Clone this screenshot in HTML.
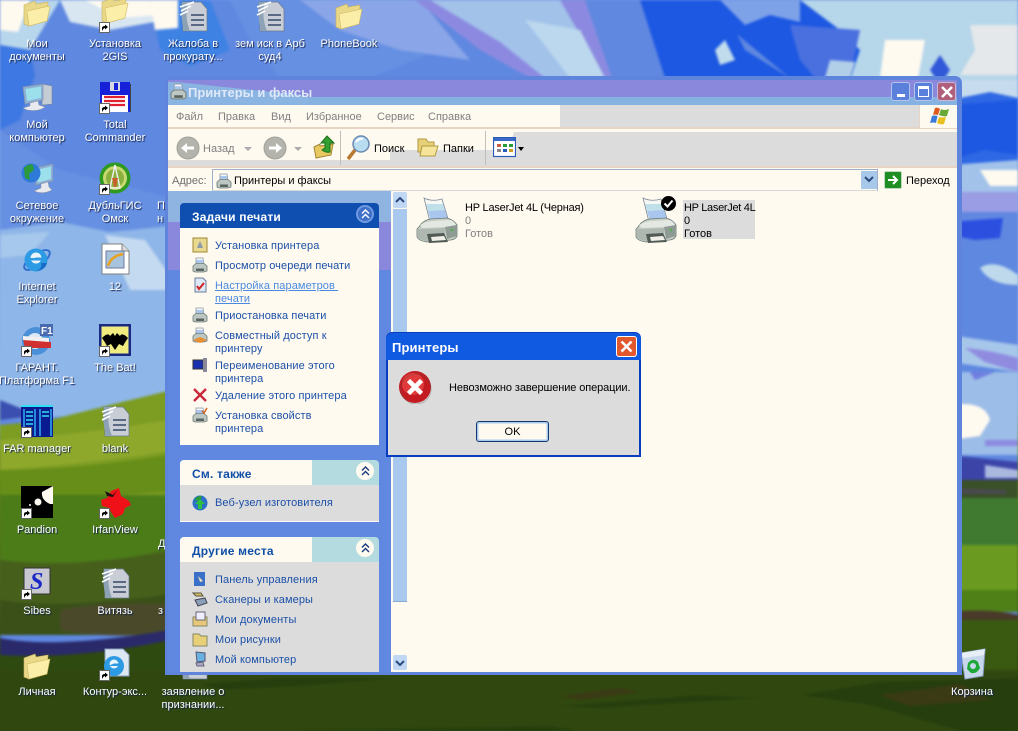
<!DOCTYPE html>
<html><head><meta charset="utf-8"><style>
html,body{margin:0;padding:0;width:1018px;height:731px;overflow:hidden;background:linear-gradient(#6f95e2 0,#8fb6e8 55%,#6a9020 62%,#46601c 82%,#30480f 90%)}
body{position:relative;font:11px/13px "Liberation Sans","Noto Sans CJK JP",sans-serif}
.a{position:absolute}
svg{display:block}
.ic{position:absolute;width:32px;height:32px}
.d{position:absolute;width:78px;text-align:center;color:#fff;text-shadow:1px 1px 1px #10204a;white-space:nowrap;font-size:11px;line-height:13px;padding-top:2px}
.t{position:absolute;white-space:nowrap;line-height:13px;padding-top:2px}
.l{position:absolute;left:215px;color:#1c50a8;white-space:nowrap;line-height:13px;letter-spacing:.1px;padding-top:2px}
.h{position:absolute;font-weight:bold;font-size:12px;line-height:14px;white-space:nowrap;letter-spacing:.2px;padding-top:1px}
.m{position:absolute;top:110px;color:#808080;line-height:13px;padding-top:1px}
.s{position:absolute;width:16px;height:16px;left:192px}
.ch{position:absolute;left:356px;width:18px;height:18px;border-radius:9px;background:#fff;box-sizing:border-box}
</style></head><body>

<svg class="a" style="left:0;top:0;filter:blur(1.2px)" width="1018" height="731" viewBox="0 0 1018 731">
<rect width="1018" height="731" fill="#5f88e0"/>
<path d="M0 0H60L30 50L0 45Z" fill="#b8d6ec"/>
<path d="M0 0H30L18 32L0 30Z" fill="#fffaf0"/>
<path d="M0 45L30 50L35 75L20 120L0 130Z" fill="#3e78e2"/>
<path d="M60 0H170L165 20L110 30L70 22Z" fill="#d8e6f2"/>
<path d="M85 0H170V14L120 18Z" fill="#fffaf0"/>
<path d="M150 0H210L230 50L190 66L160 50Z" fill="#3e82e4"/>
<path d="M150 0H178V28L155 30Z" fill="#fffaf0"/>
<path d="M230 0H410L440 50L370 78H280L250 40Z" fill="#6690e2"/>
<path d="M300 0H420L470 60L400 50L340 30Z" fill="#8aa6e8"/>
<path d="M415 0H585L612 78H530L480 50Z" fill="#8c8ae0"/>
<path d="M430 0H560L605 78H545L500 42Z" fill="#a2c2ea"/>
<path d="M525 20L570 78H605L580 30Z" fill="#bcd8ee"/>
<path d="M585 0H645L665 78H612Z" fill="#6088e0"/>
<path d="M640 0H720L745 50L790 78H665Z" fill="#1d58e2"/>
<path d="M705 0H860L875 78H790L750 45L720 20Z" fill="#1d58e2"/>
<path d="M720 0H800L800 22L770 15L745 25Z" fill="#7ea2e8"/>
<path d="M715 50L725 40L735 60L720 65Z" fill="#c0dcec"/>
<path d="M800 0H1018V80H850L860 50L840 30Z" fill="#b6d6ea"/>
<path d="M790 25L860 30L850 78H815L800 60Z" fill="#4a70e0"/>
<path d="M830 60L855 62L850 78H825Z" fill="#b2cfe8"/>
<path d="M885 40H925L918 78H880Z" fill="#fffaf0"/>
<path d="M970 25H1018V75H960L975 50Z" fill="#e4e8ea"/>
<path d="M940 55L950 70L940 85L930 70Z" fill="#3058d8"/>
<path d="M950 80H1018V190H950Z" fill="#2e68e4"/>
<path d="M950 80H1018V98L990 92L950 100Z" fill="#c6dcee"/>
<path d="M950 105L1018 100V155L985 150L950 160Z" fill="#1d58e2"/>
<path d="M950 165L1018 160V192H950Z" fill="#a2c2ea"/>
<path d="M980 170H1018V186H990Z" fill="#fffaf0"/>
<path d="M950 192H1018V212H950Z" fill="#9a9ce4"/>
<path d="M950 212H1018V240H950Z" fill="#6088e0"/>
<path d="M950 222L1003 218L1000 238L975 240L950 235Z" fill="#2c4fe0"/>
<path d="M980 268Q995 258 1018 275L1018 285Q990 285 980 268Z" fill="#bed9ec"/>
<path d="M950 335L1018 345V372L950 362Z" fill="#a6c6ea"/>
<path d="M965 348Q990 350 1018 358V372L985 362Z" fill="#8f8ce0"/>
<path d="M950 372H1018V455H950Z" fill="#9cbde8"/>
<path d="M970 372L995 372L975 380Z" fill="#6f7ee0"/>
<path d="M950 405Q985 400 990 420L980 436L950 440Z" fill="#fffaf0"/>
<path d="M985 440H1018V446H985Z" fill="#8c8ae0"/>
<path d="M0 130L60 170L180 200V240L60 230L0 240Z" fill="#6690e2"/>
<path d="M0 230L60 222L110 232L180 225V410L0 420Z" fill="#8fb6e8"/>
<path d="M105 235L145 240L180 290H130Z" fill="#c4daf0"/>
<path d="M0 235L50 232L30 255L0 258Z" fill="#a6c8ec"/>
<path d="M0 420L40 416L0 400Z" fill="#3a4fb0"/>
<path d="M0 425L50 420L110 405L180 388V520H0Z" fill="#7c9c22"/>
<path d="M0 440Q80 435 180 418V450Q80 465 0 470Z" fill="#8ea82c"/>
<path d="M0 470Q80 470 180 453V490Q80 500 0 495Z" fill="#668e18"/>
<path d="M0 495H180V590H0Z" fill="#4c7c18"/>
<path d="M0 560Q80 570 180 548V620H0Z" fill="#46601c"/>
<path d="M0 600Q60 610 180 593V635H0Z" fill="#3a5018"/>
<path d="M60 610Q110 600 180 605V632Q110 640 60 630Z" fill="#4a4a2a"/>
<path d="M0 638Q60 650 180 628V642Q80 662 0 656Z" fill="#2a2a6a"/>
<path d="M0 655Q80 660 180 638V731H0Z" fill="#2f4a10"/>
<path d="M950 455L1018 462V480H950Z" fill="#3c44a8"/>
<path d="M985 465L1018 470V478H985Z" fill="#aab8e0"/>
<path d="M950 480H1018V500H950Z" fill="#3a5028"/>
<path d="M950 488L1006 490V494H950Z" fill="#4a4a50"/>
<path d="M950 498H1018V548H950Z" fill="#3f7a30"/>
<path d="M950 545H1018V612H950Z" fill="#6a9a20"/>
<path d="M950 590H1018V612H950Z" fill="#4f8018"/>
<path d="M950 612Q990 608 1018 615V622L950 620Z" fill="#4a3a2a"/>
<path d="M950 620H1018V731H950Z" fill="#3a5a12"/>
<path d="M0 670H1018V731H0Z" fill="#30480f"/>
<g fill="#263e0e">
<path d="M200 684L280 678H400L300 686L220 690Z"/><path d="M560 706L700 695L760 698L600 708Z"/>
<path d="M800 695L880 682L1018 678V731H960L870 705Z"/><path d="M300 730L550 726L580 731H300Z"/>
</g>
<g fill="#3a3a14">
<path d="M880 695L960 684L990 700L910 706Z"/><path d="M560 696L620 688L640 692L580 700Z"/>
</g>
</svg>

<svg width="0" height="0" style="position:absolute">
<defs>
<symbol id="folder" viewBox="0 0 32 32"><path d="M3 8L14 4L15 7L27 5L26 24L8 29L3 27Z" fill="#e8d888" stroke="#c8b060" stroke-width=".6"/><path d="M6 14L29 9L26 24L8 29Z" fill="#fbeea8" stroke="#d0b860" stroke-width=".6"/></symbol>
<symbol id="sc" viewBox="0 0 11 11"><rect width="11" height="11" fill="#fff"/><rect x=".5" y=".5" width="10" height="10" fill="#fff" stroke="#000" stroke-width=".6"/><path d="M3 9V6Q3 4 6 4V2.5L9 5L6 7.5V6Q4.5 6 3 9Z" fill="#000"/></symbol>
<symbol id="doc" viewBox="0 0 32 32"><path d="M5 2H24L30 9V31H6Z" fill="#c8cdd6" stroke="#6a7a8c" stroke-width=".7"/><path d="M5 2Q3 16 7 31H13Q7 16 11 2Z" fill="#8ea2b6"/><path d="M3 7L17 2M4 11L14 6M3 15L11 11" stroke="#fff" stroke-width="1.6" fill="none"/><path d="M14 15H27M14 20H27M14 25H27" stroke="#5a6a84" stroke-width="2"/></symbol>
<symbol id="comp" viewBox="0 0 32 32"><path d="M21 3L31 5V23L21 24Z" fill="#c4ccd6" stroke="#7a8a9a" stroke-width=".6"/><path d="M2 6L22 3V19L4 23Z" fill="#8fb0d6" stroke="#8494a8" stroke-width=".7"/><path d="M4.500 8L20 5.500V17L6 20Z" fill="#9ce0ec"/><path d="M9 22L17 20L18 24L24 26Q18 31 6 29L2 27L9 25Z" fill="#e8eaf0" stroke="#8a92a0" stroke-width=".5"/></symbol>
<symbol id="net" viewBox="0 0 32 32"><path d="M13 6L32 2V19L15 23Z" fill="#8fb0d6" stroke="#8494a8" stroke-width=".7"/><path d="M15 8L30 4.500V17L17 20.500Z" fill="#9ce0ec"/><path d="M20 22L27 20L28 25L31 28Q22 33 13 29L20 26Z" fill="#e8eaf0" stroke="#8a92a0" stroke-width=".5"/><circle cx="10" cy="11" r="9.500" fill="#2e7ad8"/><path d="M3 6Q8 1 12 3L13 8L8 12L9 18L4 16Z" fill="#2c9a3a"/></symbol>
<symbol id="ie" viewBox="0 0 32 32"><ellipse cx="16" cy="17" rx="15" ry="6" transform="rotate(-35 16 17)" fill="none" stroke="#2f6fd0" stroke-width="2"/><circle cx="15" cy="17" r="11.500" fill="#2d9ae4"/><circle cx="15" cy="15" r="5.500" fill="#e8f4fa"/><rect x="8" y="15" width="14" height="2.500" fill="#2d9ae4"/><path d="M15 14.500H21V17H9Z" fill="#2d9ae4"/><path d="M20 20L26 20Q24 27 15 28Q22 25 20 20Z" fill="#1a6ac8"/></symbol>
<symbol id="tc" viewBox="0 0 32 32"><rect x="1" y="1" width="30" height="30" fill="#1620d8"/><rect x="3" y="14" width="26" height="17" fill="#fff"/><path d="M5 16H26M5 20H26M5 24H26" stroke="#e02030" stroke-width="2.200"/><rect x="11" y="1" width="10" height="9" fill="#d8d8e0"/><rect x="15" y="2" width="4" height="7" fill="#1620d8"/><rect x="31" y="3" width="1" height="28" fill="#444"/></symbol>
<symbol id="dubl" viewBox="0 0 32 32"><circle cx="16" cy="16" r="15.500" fill="#2e9a20"/><circle cx="16" cy="16" r="12" fill="#c8d870"/><circle cx="16" cy="16" r="9" fill="#8ab040"/><path d="M16 3L21 26H11Z" fill="none" stroke="#eee" stroke-width="1.500"/><path d="M13 16H19L17 25H15Z" fill="#c8602a"/></symbol>
<symbol id="note" viewBox="0 0 32 32"><path d="M3 1H23L30 8V31H3Z" fill="#fff" stroke="#808080"/><path d="M23 1V8H30" fill="#ddd" stroke="#808080"/><rect x="7" y="8" width="18" height="17" fill="#a8c4dc" stroke="#6a7a9c"/><path d="M9 23Q12 13 24 11" stroke="#e8a020" stroke-width="2.500" fill="none"/></symbol>
<symbol id="gar" viewBox="0 0 32 32"><circle cx="15" cy="17" r="14" fill="#4a90d8"/><circle cx="14" cy="17" r="8" fill="#dce8f4"/><path d="M2 15L30 18V24L4 24Z" fill="#d03030"/><path d="M2 12L28 14V18L2 16Z" fill="#f0f0f0"/><rect x="19" y="0" width="13" height="12" fill="#4a6ab0"/><text x="20" y="10" font-size="10" font-family="Liberation Sans" font-weight="bold" fill="#fff">F1</text></symbol>
<symbol id="bat" viewBox="0 0 32 32"><rect width="32" height="32" fill="#1a2a80"/><rect x="2.500" y="2.500" width="27" height="27" fill="#f0ec80"/><path d="M3 14Q9 8 11 12L14 9L16 12L18 9L21 12Q23 8 29 14Q26 18 24 22L20 20L16 26L12 20L8 22Q6 18 3 14Z" fill="#000"/></symbol>
<symbol id="far" viewBox="0 0 32 32"><rect width="32" height="32" fill="#0a1a90"/><rect x="0" y="0" width="32" height="2" fill="#30e0f0"/><path d="M3 4V31M14 4V31M19 4V31M30 4V31" stroke="#30b0f0" stroke-width="1.500"/><path d="M5 7H12M5 11H12M5 15H12M5 19H12M21 7H28M21 11H28" stroke="#30e0f0" stroke-width="1.500"/></symbol>
<symbol id="pand" viewBox="0 0 32 32"><rect width="32" height="32" fill="#000"/><path d="M21 6L32 0V18L29 18Q20 14 21 6Z" fill="#fffaf0"/><circle cx="17" cy="16" r="3.500" fill="#fffaf0"/><circle cx="9" cy="19" r="1" fill="#fff"/></symbol>
<symbol id="irf" viewBox="0 0 32 32"><path d="M2 14L8 12L12 5L20 2L22 10L30 15L32 19L26 22L24 28L16 32L12 26L10 22L3 20Z" fill="#f01018"/><path d="M6 5L14 9L18 4L14 11L8 10Z" fill="#201010"/></symbol>
<symbol id="sib" viewBox="0 0 32 32"><rect x="3" y="1" width="26" height="26" fill="#c8c8d0" stroke="#333"/><text x="9" y="22" font-size="24" font-family="Liberation Serif" font-style="italic" font-weight="bold" fill="#1a28c8">S</text></symbol>
<symbol id="iedoc" viewBox="0 0 32 32"><path d="M6 1H24L30 7V28H6Z" fill="#dce8f4" stroke="#8aa0bc"/><circle cx="15" cy="18" r="10" fill="#2d9ae4"/><circle cx="15" cy="16" r="4.500" fill="#e8f4fa"/><path d="M15 15.500H20V18H9Z" fill="#2d9ae4"/></symbol>
<symbol id="bin" viewBox="0 0 32 32"><path d="M4 5L28 1L26 28L8 31Z" fill="#c8d8ec" stroke="#8aa0c8"/><path d="M4 5L28 1L27 7L6 10Z" fill="#e8eef6"/><path d="M11 15Q16 9 21 14L23 20Q20 26 14 25L10 21Z" fill="#1ea83a"/><circle cx="16" cy="18" r="3" fill="#c8d8ec"/></symbol>
<symbol id="prn" viewBox="0 0 44 48">
<path d="M9 2Q17 6 27 3L34 26H15Z" fill="#f6f6f2" stroke="#7c8a96" stroke-width=".8"/>
<path d="M11 8L28 8L30 14L13 15Z" fill="#bfe0e8"/><path d="M13 15L30 14L33 24L16 25Z" fill="#a8c6ee"/>
<path d="M4 31Q8 24 16 23L32 22Q39 24 42 29L42 40Q41 43 36 44L12 46Q4 45 2 41L2 33Z" fill="#c8d0c8" stroke="#6a7872" stroke-width=".8"/>
<path d="M5 29Q12 25 20 25L36 24Q40 26 41 29L30 31L8 32Z" fill="#e4e8e2"/>
<path d="M3 33L30 32L30 41L12 45Q5 44 3 41Z" fill="#aeb8b0"/>
<path d="M30 31L42 29V40L32 43Z" fill="#8e9a94"/>
<path d="M12 38L29 37L33 46L14 47Z" fill="#525a56"/><path d="M16 41L29 40L31 44L17 45Z" fill="#f0f0e8"/>
<circle cx="37" cy="34" r="1.300" fill="#50b050"/></symbol>
<symbol id="smprn" viewBox="0 0 16 16"><path d="M4 1H11L12 8H4Z" fill="#f6f6f6" stroke="#8a96a4" stroke-width=".8"/><path d="M4.500 3H11V6H4.500Z" fill="#a8c6ee"/><path d="M1 9L4 6.500H12L15 9V14L12 15H3L1 14Z" fill="#bcc6c2" stroke="#6a7872" stroke-width=".8"/><rect x="4" y="11.500" width="8" height="2.500" fill="#5a6460"/></symbol>
</defs>
</svg>

<!-- Desktop icons -->
<svg class="ic" style="left:21px;top:-3px"><use href="#folder"/></svg>
<div class="d" style="left:-2px;top:36px">Мои<br>документы</div>
<svg class="ic" style="left:99px;top:-6px"><use href="#folder"/></svg><svg class="a" style="left:99px;top:22px" width="11" height="11"><use href="#sc"/></svg>
<div class="d" style="left:76px;top:36px">Установка<br>2GIS</div>
<svg class="ic" style="left:177px;top:0"><use href="#doc"/></svg>
<div class="d" style="left:154px;top:36px">Жалоба в<br>прокурату...</div>
<svg class="ic" style="left:254px;top:0"><use href="#doc"/></svg>
<div class="d" style="left:231px;top:36px">зем иск в Арб<br>суд4</div>
<svg class="ic" style="left:333px;top:0"><use href="#folder"/></svg>
<div class="d" style="left:310px;top:36px">PhoneBook</div>

<svg class="ic" style="left:21px;top:81px"><use href="#comp"/></svg>
<div class="d" style="left:-2px;top:117px">Мой<br>компьютер</div>
<svg class="ic" style="left:99px;top:81px"><use href="#tc"/></svg><svg class="a" style="left:99px;top:103px" width="11" height="11"><use href="#sc"/></svg>
<div class="d" style="left:76px;top:117px">Total<br>Commander</div>
<svg class="ic" style="left:21px;top:162px"><use href="#net"/></svg>
<div class="d" style="left:-2px;top:198px">Сетевое<br>окружение</div>
<svg class="ic" style="left:99px;top:162px"><use href="#dubl"/></svg><svg class="a" style="left:99px;top:184px" width="11" height="11"><use href="#sc"/></svg>
<div class="d" style="left:76px;top:198px">ДубльГИС<br>Омск</div>
<div class="t" style="left:157px;top:198px;color:#fff;text-shadow:1px 1px 1px #10204a">П<br>н</div>
<svg class="ic" style="left:21px;top:243px"><use href="#ie"/></svg>
<div class="d" style="left:-2px;top:279px">Internet<br>Explorer</div>
<svg class="ic" style="left:99px;top:243px"><use href="#note"/></svg>
<div class="d" style="left:76px;top:279px">12</div>
<svg class="ic" style="left:21px;top:324px"><use href="#gar"/></svg><svg class="a" style="left:21px;top:346px" width="11" height="11"><use href="#sc"/></svg>
<div class="d" style="left:-2px;top:360px">ГАРАНТ.<br>Платформа F1</div>
<svg class="ic" style="left:99px;top:324px"><use href="#bat"/></svg><svg class="a" style="left:99px;top:346px" width="11" height="11"><use href="#sc"/></svg>
<div class="d" style="left:76px;top:360px">The Bat!</div>
<svg class="ic" style="left:21px;top:405px"><use href="#far"/></svg><svg class="a" style="left:21px;top:427px" width="11" height="11"><use href="#sc"/></svg>
<div class="d" style="left:-2px;top:441px">FAR manager</div>
<svg class="ic" style="left:99px;top:405px"><use href="#doc"/></svg>
<div class="d" style="left:76px;top:441px">blank</div>
<svg class="ic" style="left:21px;top:486px"><use href="#pand"/></svg><svg class="a" style="left:21px;top:508px" width="11" height="11"><use href="#sc"/></svg>
<div class="d" style="left:-2px;top:522px">Pandion</div>
<svg class="ic" style="left:99px;top:486px"><use href="#irf"/></svg><svg class="a" style="left:99px;top:508px" width="11" height="11"><use href="#sc"/></svg>
<div class="d" style="left:76px;top:522px">IrfanView</div>
<div class="t" style="left:158px;top:536px;color:#fff;text-shadow:1px 1px 1px #10204a">Д</div>
<svg class="ic" style="left:21px;top:567px"><use href="#sib"/></svg><svg class="a" style="left:21px;top:589px" width="11" height="11"><use href="#sc"/></svg>
<div class="d" style="left:-2px;top:603px">Sibes</div>
<svg class="ic" style="left:99px;top:567px"><use href="#doc"/></svg>
<div class="d" style="left:76px;top:603px">Витязь</div>
<div class="t" style="left:158px;top:603px;color:#fff;text-shadow:1px 1px 1px #10204a">з</div>
<svg class="ic" style="left:21px;top:650px"><use href="#folder"/></svg>
<div class="d" style="left:-2px;top:684px">Личная</div>
<svg class="ic" style="left:99px;top:648px"><use href="#iedoc"/></svg><svg class="a" style="left:99px;top:670px" width="11" height="11"><use href="#sc"/></svg>
<div class="d" style="left:76px;top:684px">Контур-экс...</div>
<svg class="ic" style="left:177px;top:648px"><use href="#doc"/></svg>
<div class="d" style="left:154px;top:684px">заявление о<br>признании...</div>
<svg class="ic" style="left:957px;top:648px"><use href="#bin"/></svg>
<div class="d" style="left:933px;top:684px">Корзина</div>

<!-- Window -->
<div class="a" style="left:165px;top:76px;width:797px;height:599px;background:#5f84dc;border-radius:7px 7px 0 0"></div>
<div class="a" style="left:168px;top:80px;width:789px;height:20px;background:#8a88dc"></div>
<div class="a" style="left:168px;top:97px;width:789px;height:8px;background:#86b2e2"></div>
<div class="a" style="left:168px;top:82px;width:140px;height:23px;background:#8ab4e2;clip-path:polygon(0 0,6% 0,100% 60%,100% 100%,0 100%)"></div>
<svg class="a" style="left:170px;top:83px" width="17" height="17"><use href="#smprn"/></svg>
<div class="a" style="left:188px;top:85px;font-weight:bold;font-size:13px;line-height:15px;color:#dfe8f6;letter-spacing:0;white-space:nowrap">Принтеры и факсы</div>
<div class="a" style="left:891px;top:82px;width:19px;height:19px;border-radius:3px;background:#5a80dc;border:1px solid #b0c4ec;box-sizing:border-box"><div class="a" style="left:5px;top:11px;width:8px;height:3px;background:#fff"></div></div>
<div class="a" style="left:914px;top:82px;width:19px;height:19px;border-radius:3px;background:#5a80dc;border:1px solid #b0c4ec;box-sizing:border-box"><div class="a" style="left:3px;top:3px;width:11px;height:11px;border:1px solid #fff;border-top-width:3px;box-sizing:border-box"></div></div>
<div class="a" style="left:937px;top:82px;width:19px;height:19px;border-radius:3px;background:#b0607c;border:1px solid #c8b8d0;box-sizing:border-box"><svg class="a" style="left:3px;top:3px" width="12" height="12"><path d="M1 1L11 11M11 1L1 11" stroke="#fff" stroke-width="2.500"/></svg></div>

<!-- menu -->
<div class="a" style="left:168px;top:105px;width:789px;height:23px;background:#dcdcdc"></div>
<div class="a" style="left:168px;top:105px;width:392px;height:23px;background:#fffaf0"></div>
<div class="a" style="left:168px;top:127px;width:789px;height:2px;background:#e8d4c4"></div>
<div class="m" style="left:176px">Файл</div><div class="m" style="left:218px">Правка</div><div class="m" style="left:271px">Вид</div><div class="m" style="left:306px">Избранное</div><div class="m" style="left:377px">Сервис</div><div class="m" style="left:428px">Справка</div>
<div class="a" style="left:919px;top:105px;width:38px;height:23px;background:#fffaf0;border-left:1px solid #e8d4c4;box-sizing:border-box"></div>
<svg class="a" style="left:929px;top:105px" width="22" height="21"><path d="M6 3Q9 2 11 4L9 10Q6 9 4 10Z" fill="#e05a20"/><path d="M12 4Q15 6 20 4L18 11Q15 12 10 10Z" fill="#6aa838"/><path d="M3 11Q6 10 8.500 11L7 18Q4 17 1 18Z" fill="#3a7ad8"/><path d="M10 12Q13 13 17 12L15 19Q12 20 8 18Z" fill="#e8c020"/></svg>

<!-- toolbar -->
<div class="a" style="left:168px;top:129px;width:789px;height:37px;background:#fffaf0"></div>
<div class="a" style="left:168px;top:129px;width:789px;height:37px;background:#dcdcdc;clip-path:polygon(0 31px,222px 31px,222px 21px,340px 21px,346px 3px,100% 3px,100% 100%,0 100%)"></div>
<div class="a" style="left:168px;top:166px;width:789px;height:2px;background:#e8d4c4"></div>
<svg class="a" style="left:176px;top:136px" width="24" height="24"><circle cx="12" cy="12" r="11" fill="#b4b4ac" stroke="#a0a098"/><path d="M18 10.500H11V7L5 12L11 17V13.500H18Z" fill="#fff"/></svg>
<div class="t" style="left:203px;top:141px;color:#808080">Назад</div>
<div class="a" style="left:244px;top:147px;border:4px solid transparent;border-top-color:#aaa"></div>
<svg class="a" style="left:263px;top:136px" width="24" height="24"><circle cx="12" cy="12" r="11" fill="#b4b4ac" stroke="#a0a098"/><path d="M6 10.500H13V7L19 12L13 17V13.500H6Z" fill="#fff"/></svg>
<div class="a" style="left:294px;top:147px;border:4px solid transparent;border-top-color:#aaa"></div>
<svg class="a" style="left:313px;top:135px" width="22" height="25"><path d="M1 12L7 9V11L20 9L18 20L3 23Z" fill="#e8c860" stroke="#a08830"/><path d="M14 1L21 8H17V17Q13 18 9 15L12 13V8H8Z" fill="#32a030" stroke="#1c7020"/></svg>
<div class="a" style="left:340px;top:131px;width:1px;height:34px;background:#c0c0b8"></div>
<svg class="a" style="left:346px;top:134px" width="26" height="28"><path d="M9 16L2 25" stroke="#b87830" stroke-width="3.500"/><circle cx="15" cy="10" r="8" fill="#b8dcf0" stroke="#6a8ab0" stroke-width="1.500"/><path d="M10 8Q13 4 17 5" stroke="#fff" stroke-width="2" fill="none"/></svg>
<div class="t" style="left:374px;top:141px;color:#000">Поиск</div>
<svg class="a" style="left:416px;top:135px" width="24" height="24"><path d="M2 4H10L12 7H18V17H2Z" fill="#e8d078" stroke="#b09a40"/><path d="M6 11H22L19 21H4Z" fill="#f6e49a" stroke="#b09a40"/></svg>
<div class="t" style="left:443px;top:141px;color:#000">Папки</div>
<div class="a" style="left:485px;top:131px;width:1px;height:34px;background:#c0c0b8"></div>
<svg class="a" style="left:493px;top:137px" width="23" height="21"><rect x=".5" y=".5" width="22" height="19" fill="#fff" stroke="#2a5ab8" stroke-width="1.200"/><rect x="1" y="1" width="21" height="3" fill="#3a6ac8"/><rect x="4" y="7" width="4" height="3" fill="#c86040"/><rect x="10" y="7" width="4" height="3" fill="#2a9a3a"/><rect x="16" y="7" width="4" height="3" fill="#2a9a3a"/><rect x="4" y="12" width="4" height="3" fill="#888"/><rect x="10" y="12" width="4" height="3" fill="#2a5ab8"/><rect x="16" y="12" width="4" height="3" fill="#c8a020"/></svg>
<div class="a" style="left:518px;top:147px;border:3.500px solid transparent;border-top:4px solid #000"></div>

<!-- address -->
<div class="a" style="left:168px;top:168px;width:789px;height:23px;background:#fffaf0"></div>
<div class="t" style="left:172px;top:173px;color:#707070">Адрес:</div>
<div class="a" style="left:212px;top:169px;width:666px;height:22px;background:#fffaf0;border:1px solid #9cb0c8;border-bottom:1px solid #d8d8d8;box-sizing:border-box"></div>
<svg class="a" style="left:216px;top:173px" width="16" height="16"><use href="#smprn"/></svg>
<div class="t" style="left:234px;top:173px;color:#000">Принтеры и факсы</div>
<div class="a" style="left:861px;top:171px;width:16px;height:18px;background:#a8c8ea"><svg class="a" style="left:3px;top:5px" width="10" height="8"><path d="M1 1L5 5L9 1" stroke="#2a4a80" stroke-width="2" fill="none"/></svg></div>
<div class="a" style="left:884px;top:171px;width:18px;height:18px;background:#1f8f24;border-radius:2px;border:1px solid #c0d8c0;box-sizing:border-box"><svg class="a" style="left:2px;top:2px" width="12" height="12"><path d="M1 6H10M6 2L10 6L6 10" stroke="#fff" stroke-width="2" fill="none"/></svg></div>
<div class="t" style="left:906px;top:173px;color:#000">Переход</div>

<!-- left pane -->
<div class="a" style="left:168px;top:191px;width:223px;height:481px;background:#6088e0"></div>
<div class="a" style="left:168px;top:191px;width:223px;height:31px;background:#8fb4e2"></div>
<div class="a" style="left:168px;top:222px;width:223px;height:48px;background:#8a88dc"></div>

<div class="a" style="left:180px;top:203px;width:199px;height:25px;background:#0f4fb0;border-radius:4px 4px 0 0"></div>
<div class="h" style="left:192px;top:209px;color:#fff">Задачи печати</div>
<div class="ch" style="top:205px;background:#3f6fc8;border:2px solid #6f9ae0"><svg class="a" style="left:3px;top:2px" width="9" height="10"><path d="M1 4.500L4.500 1L8 4.500M1 9L4.500 5.500L8 9" stroke="#fff" stroke-width="1.400" fill="none"/></svg></div>
<div class="a" style="left:180px;top:228px;width:199px;height:217px;background:#fffaf0"></div>
<svg class="s" style="top:237px"><rect x="1" y="1" width="14" height="14" fill="#e8d890" stroke="#a08830"/><path d="M5 11L8 4L11 11Z" fill="#8a9aa8"/></svg>
<div class="l" style="top:238px">Установка принтера</div>
<svg class="s" style="top:257px"><use href="#smprn"/></svg>
<div class="l" style="top:258px">Просмотр очереди печати</div>
<svg class="s" style="top:277px"><path d="M3 1H11L14 4V15H3Z" fill="#dce8f4" stroke="#6a7a9c"/><path d="M5 9L7 12L12 6" stroke="#d02020" stroke-width="2" fill="none"/></svg>
<div class="l" style="top:278px;color:#4a8ae0;text-decoration:underline;white-space:pre">Настройка параметров <br>печати</div>
<svg class="s" style="top:307px"><use href="#smprn"/></svg>
<div class="l" style="top:308px">Приостановка печати</div>
<svg class="s" style="top:327px"><use href="#smprn"/><path d="M1 13L8 10L15 13L8 16Z" fill="#e89030"/></svg>
<div class="l" style="top:328px">Совместный доступ к<br>принтеру</div>
<svg class="s" style="top:357px"><rect x="1" y="3" width="10" height="9" fill="#1a30b0" stroke="#333"/><rect x="11" y="1" width="4" height="14" fill="#889"/></svg>
<div class="l" style="top:358px">Переименование этого<br>принтера</div>
<svg class="s" style="top:387px"><path d="M2 2L14 14M14 2L2 14" stroke="#c82838" stroke-width="2.400"/></svg>
<div class="l" style="top:388px">Удаление этого принтера</div>
<svg class="s" style="top:407px"><use href="#smprn"/><path d="M10 4L12 6L15 1" stroke="#d06020" stroke-width="1.500" fill="none"/></svg>
<div class="l" style="top:408px">Установка свойств<br>принтера</div>

<div class="a" style="left:180px;top:460px;width:199px;height:25px;background:#b4dce0;border-radius:4px 4px 0 0"></div>
<div class="a" style="left:180px;top:460px;width:132px;height:25px;background:#fffaf0;border-radius:4px 0 0 0"></div>
<div class="h" style="left:192px;top:466px;color:#0f4fa8">См. также</div>
<div class="ch" style="top:462px;background:#fffaf0"><svg class="a" style="left:5px;top:4px" width="9" height="10"><path d="M1 4.500L4.500 1L8 4.500M1 9L4.500 5.500L8 9" stroke="#1a3a80" stroke-width="1.400" fill="none"/></svg></div>
<div class="a" style="left:180px;top:485px;width:199px;height:36px;background:#dcdcdc;border-bottom:1px solid #fff"></div>
<svg class="s" style="top:495px"><circle cx="8" cy="8" r="7.500" fill="#2a70c8"/><path d="M2 5Q6 0 10 1L8 6Z" fill="#2a9a3a"/><path d="M8 4L13 9H10V14H6V9H3Z" fill="#30c040"/></svg>
<div class="l" style="top:495px">Веб-узел изготовителя</div>

<div class="a" style="left:180px;top:537px;width:199px;height:25px;background:#b4dce0;border-radius:4px 4px 0 0"></div>
<div class="a" style="left:180px;top:537px;width:132px;height:25px;background:#fffaf0;border-radius:4px 0 0 0"></div>
<div class="h" style="left:192px;top:543px;color:#0f4fa8">Другие места</div>
<div class="ch" style="top:539px;background:#fffaf0"><svg class="a" style="left:5px;top:4px" width="9" height="10"><path d="M1 4.500L4.500 1L8 4.500M1 9L4.500 5.500L8 9" stroke="#1a3a80" stroke-width="1.400" fill="none"/></svg></div>
<div class="a" style="left:180px;top:562px;width:199px;height:110px;background:#dcdcdc"></div>
<svg class="s" style="top:571px"><rect x="2" y="1" width="11" height="14" fill="#3a70c8"/><path d="M6 5L11 10L8 11Z" fill="#f0e0c0"/></svg>
<div class="l" style="top:572px">Панель управления</div>
<svg class="s" style="top:591px"><path d="M1 2H9L11 5H4Z" fill="#d8c060" stroke="#554"/><path d="M3 9L13 7L15 12L6 15Z" fill="#8aa0b8" stroke="#445"/></svg>
<div class="l" style="top:592px">Сканеры и камеры</div>
<svg class="s" style="top:611px"><rect x="1" y="6" width="14" height="9" fill="#e8c878" stroke="#886"/><rect x="4" y="1" width="9" height="8" fill="#eef" stroke="#667"/></svg>
<div class="l" style="top:612px">Мои документы</div>
<svg class="s" style="top:631px"><path d="M1 3H7L9 5H15V15H1Z" fill="#e8d078" stroke="#886"/></svg>
<div class="l" style="top:632px">Мои рисунки</div>
<svg class="s" style="top:651px"><path d="M4 1L13 2V10L5 11Z" fill="#6ab0e0" stroke="#557"/><path d="M4 12L11 11L12 15L5 15Z" fill="#a8a8c8" stroke="#667"/></svg>
<div class="l" style="top:652px">Мой компьютер</div>

<!-- right pane -->
<div class="a" style="left:391px;top:191px;width:566px;height:481px;background:#fffaf0"></div>
<div class="a" style="left:393px;top:192px;width:14px;height:16px;background:#c0d8f4;border-radius:2px"><svg class="a" style="left:2px;top:4px" width="10" height="8"><path d="M1 6L5 2L9 6" stroke="#2a4a80" stroke-width="2" fill="none"/></svg></div>
<div class="a" style="left:393px;top:209px;width:14px;height:393px;background:#a8c8ee;border-bottom:1px solid #88a8d8;box-sizing:border-box"></div>
<div class="a" style="left:393px;top:655px;width:14px;height:15px;background:#c0d8f4;border-radius:2px"><svg class="a" style="left:2px;top:4px" width="10" height="8"><path d="M1 2L5 6L9 2" stroke="#2a4a80" stroke-width="2" fill="none"/></svg></div>

<svg class="a" style="left:415px;top:196px" width="44" height="48"><use href="#prn"/></svg>
<div class="t" style="left:465px;top:200px;color:#000;letter-spacing:-.2px">HP LaserJet 4L (Черная)</div>
<div class="t" style="left:465px;top:213px;color:#808080">0</div>
<div class="t" style="left:465px;top:226px;color:#808080">Готов</div>
<svg class="a" style="left:634px;top:196px" width="44" height="48"><use href="#prn"/></svg>
<svg class="a" style="left:661px;top:196px" width="15" height="15"><circle cx="7.500" cy="7.500" r="7.500" fill="#000"/><path d="M3.500 7.500L6.500 10.500L11.500 4.500" stroke="#fff" stroke-width="2" fill="none"/></svg>
<div class="a" style="left:683px;top:200px;width:72px;height:39px;background:#dcdcdc"></div>
<div class="t" style="left:684px;top:200px;color:#000;letter-spacing:-.3px">HP LaserJet 4L</div>
<div class="t" style="left:684px;top:213px;color:#000">0</div>
<div class="t" style="left:684px;top:226px;color:#000">Готов</div>

<!-- dialog -->
<div class="a" style="left:386px;top:332px;width:255px;height:125px;background:#0a3cc0;border-radius:6px 6px 0 0"></div>
<div class="a" style="left:386px;top:333px;width:255px;height:27px;background:#0f5ae0;border-radius:6px 6px 0 0"></div>
<div class="a" style="left:392px;top:340px;font-weight:bold;font-size:13px;line-height:15px;color:#fff;letter-spacing:.1px;white-space:nowrap">Принтеры</div>
<div class="a" style="left:616px;top:336px;width:21px;height:21px;border-radius:3px;background:#e0582c;border:1px solid #fff;box-sizing:border-box"><svg class="a" style="left:3px;top:3px" width="13" height="13"><path d="M1.500 1.500L11.500 11.500M11.500 1.500L1.500 11.500" stroke="#fff" stroke-width="2.600"/></svg></div>
<div class="a" style="left:388px;top:360px;width:251px;height:95px;background:#dcdcdc"></div>
<svg class="a" style="left:398px;top:370px" width="34" height="34"><circle cx="17" cy="17" r="16" fill="#c41a22"/><circle cx="15" cy="14" r="11" fill="#e03a3a"/><circle cx="18" cy="19" r="15" fill="none" stroke="#555" stroke-opacity=".35" stroke-width="1"/><path d="M10.500 10.500L23.500 23.500M23.500 10.500L10.500 23.500" stroke="#fff" stroke-width="4.600"/></svg>
<div class="t" style="left:449px;top:380px;color:#000;letter-spacing:-.1px">Невозможно завершение операции.</div>
<div class="a" style="left:476px;top:421px;width:73px;height:21px;background:#fffaf0;border:1px solid #123a70;border-radius:3px;box-sizing:border-box;box-shadow:inset 0 0 0 1.500px #a8c8ee;text-align:center;line-height:21px;color:#000">OK</div>

</body></html>
